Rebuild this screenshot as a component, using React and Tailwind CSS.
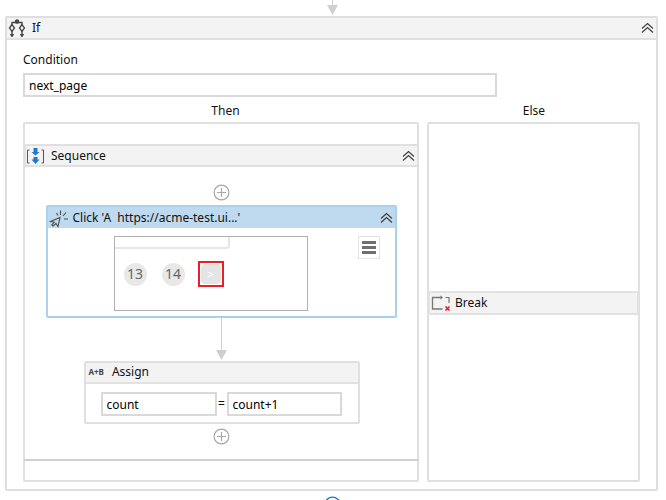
import { useState } from 'react'

function Chevrons({ className = '' }) {
  return (
    <svg width="13" height="12" viewBox="0 0 13 12" fill="none" stroke="#3c3c3c" strokeWidth="1.1" className={className}>
      <path d="M1 6.500 6.500 1.500 12 6.500" />
      <path d="M1 10.500 6.500 5.500 12 10.500" />
    </svg>
  )
}

function PlusCircle() {
  return (
    <svg width="17" height="17" viewBox="0 0 17 17" fill="none" stroke="#a8a8a8" strokeWidth="1.2" className="block">
      <circle cx="8.500" cy="8.500" r="7.400" />
      <path d="M8.500 4v9M4 8.500h9" />
    </svg>
  )
}

function IfIcon() {
  return (
    <svg width="18" height="18" viewBox="0 0 18 18" fill="none" stroke="#444" strokeWidth="1.300">
      <circle cx="9" cy="2.500" r="1.600" fill="#444" />
      <path d="M4 6.500V3.500h10v3" />
      <path d="M4 5.500 1.500 9 4 12.500 6.500 9Z" />
      <path d="M14 5.500 11.500 9 14 12.500 16.500 9Z" />
      <path d="M4 12v4M14 12v4" />
      <path d="M2.500 15 4 17.500 5.500 15M12.500 15 14 17.500 15.500 15" fill="#444" />
    </svg>
  )
}

function SequenceIcon() {
  return (
    <svg width="19" height="18" viewBox="0 0 19 18" fill="none" className="block">
      <path d="M3.500 3H1.500v13h2M15.500 3h2v13h-2" stroke="#555" strokeWidth="1" />
      <path d="M7.500 1h4v4h2l-4 3.500L5.500 5h2Z" fill="#1f78d1" />
      <path d="M7.500 10h4v2.500h2l-4 4.500-4-4.500h2Z" fill="#1f78d1" />
    </svg>
  )
}

function ClickIcon() {
  return (
    <svg width="20" height="20" viewBox="0 0 20 20" fill="none" stroke="#4d4d4d" strokeWidth="1.1" className="block">
      <path d="M1.500 13.500 11 9.500 9 18.500 7 15.500 4 18 2.800 16.700 5.300 14.300Z" />
      <path d="M11.500 7V2.500M14 8l3-3.500M15 11h4M9 7.500 7.500 5" />
    </svg>
  )
}

function BreakIcon() {
  return (
    <svg width="20" height="18" viewBox="0 0 20 18" fill="none" className="block">
      <path d="M10 3.500H1.500V15h10" stroke="#777" strokeWidth="1.300" />
      <path d="M9.500 1.500 12 3.500 9.500 5.500Z" fill="#777" />
      <path d="M14.500 3.500H18V9" stroke="#777" strokeWidth="1.200" />
      <path d="M14.500 12.500l4 4M18.500 12.500l-4 4" stroke="#e81123" strokeWidth="1.500" />
    </svg>
  )
}

function Connector({ height }) {
  return (
    <div className="flex flex-col items-center">
      <div className="w-px bg-[#cfcfcf]" style={{ height }} />
      <svg width="11" height="10" viewBox="0 0 11 10" className="block">
        <path d="M0 0h11L5.500 10Z" fill="#cfcfcf" />
      </svg>
    </div>
  )
}

function Field({ value, className = '' }) {
  return (
    <div className={`flex items-center border-2 border-[#d9d9d9] bg-white pl-1 pt-[2px] text-black ${className}`}>
      {value}
    </div>
  )
}

function CardHeader({ icon, title, collapse = true, className = '' }) {
  return (
    <div className={`flex items-center ${className}`}>
      {icon}
      <span>{title}</span>
      {collapse && <Chevrons className="ml-auto" />}
    </div>
  )
}

export default function App() {
  const [condition] = useState('next_page')

  return (
    <div className="h-[500px] w-[666px] overflow-hidden bg-white font-['Noto_Sans',sans-serif] text-[12px] leading-none text-[#111]">
      <div className="flex w-[666px] justify-center pr-[1px]">
        <Connector height={5} />
      </div>

      <div className="ml-[5px] mt-[1px] h-[475px] w-[653px] rounded-[2px] border-2 border-[#dedede]">
        <CardHeader
          icon={<IfIcon />}
          title="If"
          className="h-[22px] gap-[6px] border-b-2 border-[#e0e0e0] bg-[#f3f3f3] pl-[1px] pr-[2px]"
        />

        <div className="px-[16px]">
          <div className="pt-[14px]">Condition</div>
          <Field value={condition} className="mt-[7px] h-[24px] w-[474px]" />

          <div className="mt-[8px] flex text-center">
            <div className="w-[405px]">Then</div>
            <div className="w-[212px]">Else</div>
          </div>

          <div className="mt-[5px] flex gap-[8px]">
            <div className="h-[360px] w-[397px] rounded-[2px] border-2 border-[#e0e0e0] pt-[20px]">
              <div className="-ml-[1px] -mr-[2px] h-[317px] border-b-2 border-[#d0d0d0]">
                <CardHeader
                  icon={<SequenceIcon />}
                  title="Sequence"
                  className="h-[23px] gap-[6px] border-2 border-[#e0e0e0] bg-[#f3f3f3] pr-[2px]"
                />

                <div className="flex flex-col items-center">
                  <div className="mt-[17px]">
                    <PlusCircle />
                  </div>

                  <div className="mr-[1px] mt-[4px] w-[351px] rounded-[2px] border-2 border-[#a9d0ee]">
                    <CardHeader
                      icon={<ClickIcon />}
                      title="Click 'A  https://acme-test.ui...'"
                      className="h-[21px] gap-[4px] whitespace-pre bg-[#bfdaee] pl-[1px] pr-[2px]"
                    />
                    <div className="flex h-[88px] items-start pl-[66px] pt-[8px]">
                      <div className="h-[75px] w-[194px] border border-[#b0b0b0] bg-white">
                        <div className="h-[12px] w-[115px] rounded-br-[4px] border-b-2 border-r-2 border-[#e6e6e6]" />
                        <div className="mt-[12px] flex items-center pl-[9px]">
                          <div className="flex h-[23px] w-[23px] items-center justify-center rounded-full bg-[#e8e8e8] text-[14px] text-[#666]">13</div>
                          <div className="ml-[15px] flex h-[23px] w-[23px] items-center justify-center rounded-full bg-[#e8e8e8] text-[14px] text-[#666]">14</div>
                          <div className="ml-[13px] flex h-[26px] w-[26px] items-center justify-center border-2 border-[#ee1c25]">
                            <div className="flex h-[20px] w-[20px] items-center justify-center rounded-[4px] bg-[#e4e4e4] text-[13px] text-white">&gt;</div>
                          </div>
                        </div>
                      </div>
                      <div className="ml-[50px] flex h-[23px] w-[22px] flex-col items-center justify-center gap-[2px] border border-[#e4e4e4]">
                        <div className="h-[3px] w-[14px] bg-[#707070]" />
                        <div className="h-[3px] w-[14px] bg-[#707070]" />
                        <div className="h-[3px] w-[14px] bg-[#707070]" />
                      </div>
                    </div>
                  </div>

                  <div className="-ml-[1px]">
                    <Connector height={32} />
                  </div>

                  <div className="mt-[1px] w-[276px] rounded-[2px] border-2 border-[#e0e0e0]">
                    <CardHeader
                      icon={<span className="text-[8px] font-bold text-[#444]">A+B</span>}
                      title="Assign"
                      collapse={false}
                      className="h-[21px] gap-[8px] border-b-2 border-[#e2e2e2] bg-[#f3f3f3] pb-[1px] pl-[3px]"
                    />
                    <div className="flex h-[38px] items-center pl-[15px] pt-[2px]">
                      <Field value="count" className="h-[24px] w-[116px]" />
                      <span className="w-[10px] text-center">=</span>
                      <Field value="count+1" className="h-[24px] w-[115px]" />
                    </div>
                  </div>

                  <div className="-ml-[1px] mt-[4px]">
                    <PlusCircle />
                  </div>
                </div>
              </div>
            </div>

            <div className="flex h-[360px] w-[213px] items-center rounded-[2px] border-2 border-[#e0e0e0]">
              <CardHeader
                icon={<BreakIcon />}
                title="Break"
                collapse={false}
                className="-ml-[1px] mt-[2px] h-[24px] w-[211px] shrink-0 gap-[4px] rounded-[2px] border-2 border-[#e2e2e2] bg-[#f3f3f3] pl-[1px]"
              />
            </div>
          </div>
        </div>
      </div>

      <div className="mt-[5px] flex justify-center pr-[2px]">
        <svg width="17" height="17" viewBox="0 0 17 17" fill="none" stroke="#0a7ad8" strokeWidth="1.300">
          <circle cx="8.500" cy="8.500" r="7.400" />
          <path d="M8.500 4v9M4 8.500h9" />
        </svg>
      </div>
    </div>
  )
}
